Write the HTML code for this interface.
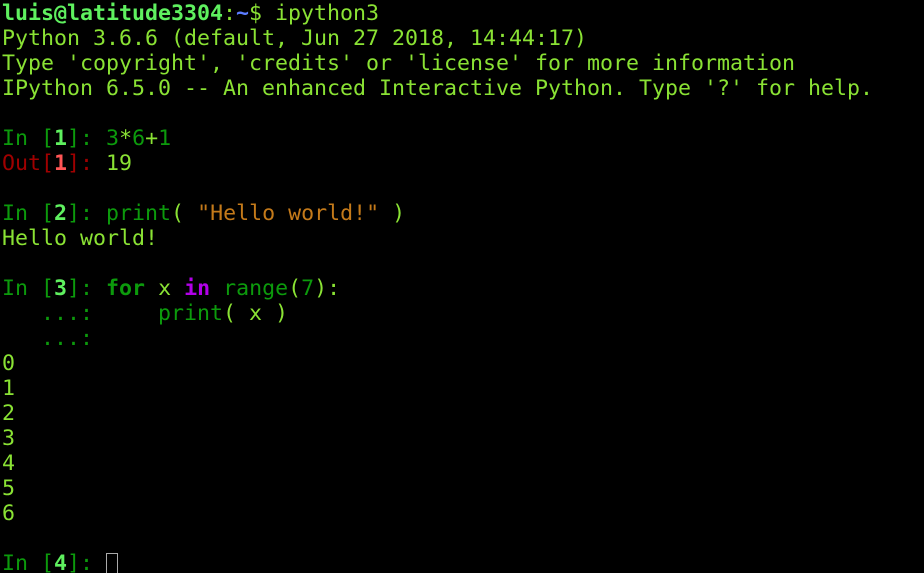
<!DOCTYPE html>
<html><head><style>
html,body{margin:0;padding:0;background:#000;width:924px;height:573px;overflow:hidden}
pre{margin:0;padding:1px 0 0 2px;font-family:"DejaVu Sans Mono","Liberation Mono",monospace;font-size:21.6px;line-height:25px;color:#8ae234;white-space:pre}
.b{font-weight:bold}
.g{color:#0c9a0c}
.G{color:#5ff05f;font-weight:bold}
.r{color:#a00000}
.R{color:#ff5555;font-weight:bold}
.u{color:#5c7cff;font-weight:bold}
.o{color:#c47a1a}
.p{color:#b200e8;font-weight:bold}
.cur{display:inline-block;width:12px;height:23px;border:1px solid #aaa;vertical-align:-6px;box-sizing:border-box}
</style></head><body><pre><span class="G">luis@latitude3304</span>:<span class="u">~</span>$ ipython3
Python 3.6.6 (default, Jun 27 2018, 14:44:17)
Type 'copyright', 'credits' or 'license' for more information
IPython 6.5.0 -- An enhanced Interactive Python. Type '?' for help.

<span class="g">In [</span><span class="G">1</span><span class="g">]: </span><span class="g">3</span>*<span class="g">6</span>+<span class="g">1</span>
<span class="r">Out[</span><span class="R">1</span><span class="r">]: </span>19

<span class="g">In [</span><span class="G">2</span><span class="g">]: print</span>( <span class="o">"Hello world!"</span> )
Hello world!

<span class="g">In [</span><span class="G">3</span><span class="g">]: </span><span class="g b">for</span> x <span class="p">in</span> <span class="g">range</span>(<span class="g">7</span>):
<span class="g">   ...:     print</span>( x )
<span class="g">   ...:</span>
0
1
2
3
4
5
6

<span class="g">In [</span><span class="G">4</span><span class="g">]: </span><span class="cur"></span></pre></body></html>
